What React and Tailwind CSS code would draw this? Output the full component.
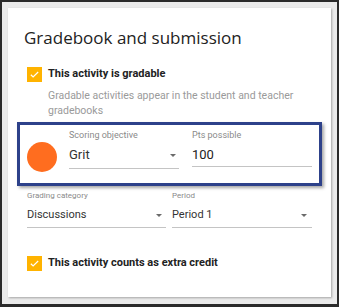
import React from 'react'

function Check() {
  return (
    <span className="flex h-[15px] w-[15px] shrink-0 items-center justify-center bg-[#ffb300]">
      <svg width="11" height="11" viewBox="0 0 24 24" fill="none">
        <path d="M4 12.5l5 5L20 6.5" stroke="white" strokeWidth="2.6" />
      </svg>
    </span>
  )
}

function Caret({ className }) {
  return (
    <svg width="6" height="3" viewBox="0 0 6 3" className={'shrink-0 ' + (className || '')}>
      <path d="M0 0h6L3 3z" fill="#6b6b6b" />
    </svg>
  )
}

export default function App() {
  return (
    <div
      className="h-[307px] w-[339px] bg-[#2b2b2b] pt-[2px] pr-[2px] pb-[3px] pl-[2px]"
      style={{ fontFamily: 'Roboto, "Liberation Sans", sans-serif' }}
    >
      <div className="h-full bg-[#ebebeb] px-[6px] pt-[6px] pb-[7px]">
        <div className="h-full bg-white pt-[18px] shadow-[1px_1px_2px_rgba(0,0,0,0.3)]">
          <h1
            className="px-[16px] text-[17px] leading-[24px] text-[#222]"
            style={{ fontFamily: '"Open Sans", sans-serif' }}
          >
            Gradebook and submission
          </h1>

          <div className="mt-[16px] flex items-center gap-[6px] pl-[19px]">
            <Check />
            <span className="text-[11px] font-bold leading-[16px] text-[#222]">
              This activity is gradable
            </span>
          </div>
          <p className="mt-[6px] pr-[20px] pl-[40px] text-[10.5px] leading-[15px] text-[#9a9a9a]">
            Gradable activities appear in the student and teacher gradebooks
          </p>

          <div className="mx-[9px] mt-[4px] flex h-[64px] items-start border-[3px] border-[#2d418a] pt-[5px] pl-[7px] shadow-[2px_2px_3px_rgba(0,0,0,0.35)]">
            <span className="mt-[12px] h-[30px] w-[30px] shrink-0 rounded-full bg-[#ff6d1f]" />
            <div className="ml-[12px] w-[110px]">
              <div className="text-[9px] leading-[11px] text-[#8a8a8a]">Scoring objective</div>
              <div className="mt-[6px] flex items-center justify-between border-b border-[#c4c4c4] pb-[5px]">
                <span className="text-[13px] leading-[16px] text-[#333]">Grit</span>
                <Caret className="mr-[3px]" />
              </div>
            </div>
            <div className="ml-[13px] w-[120px]">
              <div className="text-[9px] leading-[11px] text-[#8a8a8a]">Pts possible</div>
              <div className="mt-[6px] border-b border-[#c4c4c4] pb-[3px] text-[13px] leading-[16px] text-[#222]">
                100
              </div>
            </div>
          </div>

          <div className="mt-[5px] flex gap-[6px] pr-[19px] pl-[19px]">
            <div className="w-[139px]">
              <div className="text-[8px] leading-[10px] text-[#8a8a8a]">Grading category</div>
              <div className="mt-[7px] flex items-center justify-between border-b border-[#c4c4c4] pb-[5px]">
                <span className="text-[11px] leading-[14px] text-[#333]">Discussions</span>
                <Caret className="mr-[4px]" />
              </div>
            </div>
            <div className="flex-1">
              <div className="text-[8px] leading-[10px] text-[#8a8a8a]">Period</div>
              <div className="mt-[7px] flex items-center justify-between border-b border-[#c4c4c4] pb-[5px]">
                <span className="text-[11px] leading-[14px] text-[#333]">Period 1</span>
                <Caret className="mr-[5px]" />
              </div>
            </div>
          </div>

          <div className="mt-[27px] flex items-center gap-[6px] pl-[19px]">
            <Check />
            <span className="text-[11px] font-bold leading-[16px] text-[#222]">
              This activity counts as extra credit
            </span>
          </div>
        </div>
      </div>
    </div>
  )
}
